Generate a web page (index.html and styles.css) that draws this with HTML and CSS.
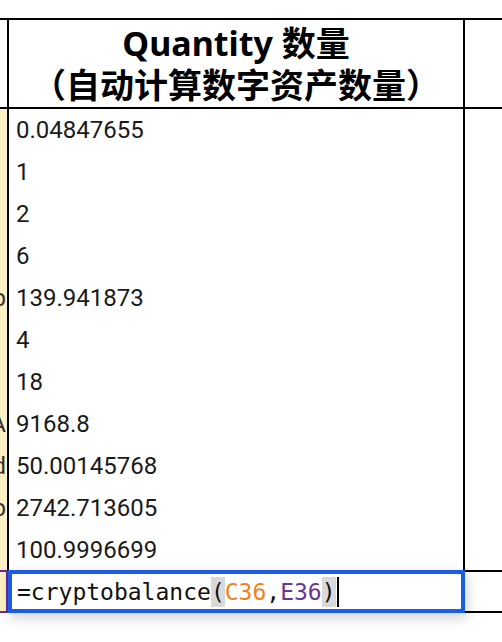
FILE: index.html
```html
<!DOCTYPE html>
<html lang="zh">
<head>
<meta charset="utf-8">
<title>Quantity</title>
<link rel="stylesheet" href="styles.css">
</head>
<body>
<div class="sheet">
  <div class="spacer"></div>
  <div class="row header">
    <div class="cell side"></div>
    <div class="cell main head">
      <div class="h-line">Quantity 数量</div>
      <div class="h-line">（自动计算数字资产数量）</div>
    </div>
    <div class="cell rest"></div>
  </div>
  <div class="row data"><div class="cell side"></div><div class="cell main">0.04847655</div><div class="cell rest"></div></div>
  <div class="row data"><div class="cell side"></div><div class="cell main">1</div><div class="cell rest"></div></div>
  <div class="row data"><div class="cell side"></div><div class="cell main">2</div><div class="cell rest"></div></div>
  <div class="row data"><div class="cell side"></div><div class="cell main">6</div><div class="cell rest"></div></div>
  <div class="row data"><div class="cell side"><span class="over">ab</span></div><div class="cell main">139.941873</div><div class="cell rest"></div></div>
  <div class="row data"><div class="cell side"></div><div class="cell main">4</div><div class="cell rest"></div></div>
  <div class="row data"><div class="cell side"></div><div class="cell main">18</div><div class="cell rest"></div></div>
  <div class="row data"><div class="cell side"><span class="over">A</span></div><div class="cell main">9168.8</div><div class="cell rest"></div></div>
  <div class="row data"><div class="cell side"><span class="over">d</span></div><div class="cell main">50.00145768</div><div class="cell rest"></div></div>
  <div class="row data"><div class="cell side"><span class="over">ob</span></div><div class="cell main">2742.713605</div><div class="cell rest"></div></div>
  <div class="row data"><div class="cell side"></div><div class="cell main">100.9996699</div><div class="cell rest"></div></div>
  <div class="row formula">
    <div class="cell side range"></div>
    <div class="cell editor">
      <span class="tok">=cryptobalance</span><span class="paren">(</span><span class="ref-c">C36</span><span class="tok">,</span><span class="ref-e">E36</span><span class="paren">)</span><span class="caret"></span>
    </div>
    <div class="cell rest lined"></div>
  </div>
</div>
</body>
</html>
```
FILE: styles.css
```css
html, body {
  margin: 0;
  padding: 0;
  background: #ffffff;
}
body {
  width: 502px;
  height: 642px;
  overflow: hidden;
}
.sheet {
  display: flex;
  flex-direction: column;
  width: 502px;
}
.spacer {
  height: 18px;
}
.row {
  display: grid;
  grid-template-columns: 7px 458px 1fr;
  box-sizing: border-box;
}
.header {
  height: 91px;
  border-top: 2px solid #000;
  border-bottom: 2px solid #000;
}
.data {
  height: 42px;
}
.cell {
  box-sizing: border-box;
  min-width: 0;
}
.main {
  border-left: 2px solid #000;
  border-right: 2px solid #000;
  display: flex;
  align-items: center;
  padding-left: 7px;
  font-family: Roboto, "Liberation Sans", sans-serif;
  font-size: 24px;
  color: #1a1a1a;
  white-space: nowrap;
}
.head {
  flex-direction: column;
  justify-content: center;
  padding-left: 0;
  font-family: "Noto Sans", "Noto Sans CJK SC", sans-serif;
  font-weight: 700;
  font-size: 34px;
  color: #000;
}
.h-line {
  line-height: 42px;
  text-align: center;
}
.data .side {
  background: #fdf0c4;
  overflow: hidden;
  display: flex;
  justify-content: flex-end;
  align-items: center;
  font-family: Roboto, "Liberation Sans", sans-serif;
  font-size: 24px;
  color: #333;
}
.over {
  white-space: nowrap;
  padding-right: 1px;
}
.formula {
  height: 43px;
  margin-top: -1px;
}
.range {
  background: #fdf0c4;
  border-top: 2px solid #6b2a8e;
  border-bottom: 2px solid #6b2a8e;
  border-right: 2px solid #6b2a8e;
  margin-right: -1px;
}
.editor {
  margin-left: 1px;
  border: 4px solid #1a5de6;
  background: #fff;
  box-shadow: 2px 5px 12px rgba(0, 0, 0, 0.18);
  display: flex;
  align-items: center;
  padding-left: 5px;
  font-family: "DejaVu Sans Mono", "Liberation Mono", monospace;
  font-size: 23px;
  line-height: 30px;
  color: #111;
  white-space: pre;
  position: relative;
  z-index: 2;
}
.paren {
  display: inline-block;
  background: #d9d9d9;
  line-height: 30px;
  height: 30px;
}
.ref-c {
  color: #f0821c;
}
.ref-e {
  color: #6b3594;
}
.caret {
  display: inline-block;
  width: 2px;
  height: 30px;
  background: #000;
  margin-left: 1px;
}
.lined {
  border-top: 2px solid #000;
  border-bottom: 2px solid #000;
}
```
